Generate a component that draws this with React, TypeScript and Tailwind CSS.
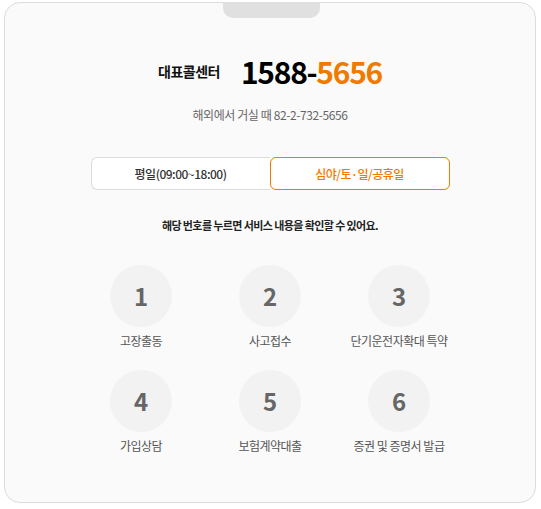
import React from "react";

const items = [
  { n: "1", label: "고장출동" },
  { n: "2", label: "사고접수" },
  { n: "3", label: "단기운전자확대 특약" },
  { n: "4", label: "가입상담" },
  { n: "5", label: "보험계약대출" },
  { n: "6", label: "증권 및 증명서 발급" },
];

export default function App() {
  return (
    <div
      className="w-[541px] h-[509px] bg-white pt-[2px] pl-[4px] pr-[5px] pb-[6px]"
      style={{ fontFamily: '"Noto Sans CJK KR", "Noto Sans", sans-serif' }}
    >
      <div className="relative h-full w-full rounded-[16px] border border-[#dcdcdc] bg-[#fafafa] flex flex-col items-center">
        <div className="absolute top-[-1px] left-[218px] w-[97px] h-[16px] rounded-b-[10px] bg-[#e0e0e0]" />
        <div className="mt-[53px] flex items-center gap-[21px]">
          <span className="text-[14px] font-bold text-[#111] tracking-[-0.5px] leading-none">대표콜센터</span>
          <span className="text-[30px] font-bold leading-none tracking-[-1.3px]">
            <span className="text-black">1588-</span>
            <span className="text-[#f07a00]">5656</span>
          </span>
        </div>
        <div className="mt-[23px] text-[12px] text-[#666] tracking-[-0.4px] leading-none">
          해외에서 거실 때 82-2-732-5656
        </div>
        <div className="mt-[36px] flex w-[359px] h-[33px]">
          <div className="flex-1 flex items-center justify-center rounded-l-[6px] border border-r-0 border-[#dcdcdc] bg-white text-[12px] font-medium text-[#333] tracking-[-0.5px]">
            평일(09:00~18:00)
          </div>
          <div className="flex-1 flex items-center justify-center rounded-[6px] border border-[#f07a00] bg-white text-[12px] font-medium text-[#f07a00] tracking-[-0.5px]">
            심야/토·일/공휴일
          </div>
        </div>
        <div className="mt-[30px] text-[11px] font-semibold text-[#222] tracking-[-0.6px] leading-none">
          해당 번호를 누르면 서비스 내용을 확인할 수 있어요.
        </div>
        <div className="mt-[34px] grid grid-cols-3 w-[387px] gap-y-[20px]">
          {items.map((it) => (
            <div key={it.n} className="flex flex-col items-center">
              <div className="w-[62px] h-[62px] rounded-full bg-[#f2f2f2] flex items-center justify-center text-[24px] font-bold text-[#666]">
                {it.n}
              </div>
              <div className="mt-[5px] text-[12px] text-[#555] tracking-[-0.5px] leading-[18px]">
                {it.label}
              </div>
            </div>
          ))}
        </div>
      </div>
    </div>
  );
}
